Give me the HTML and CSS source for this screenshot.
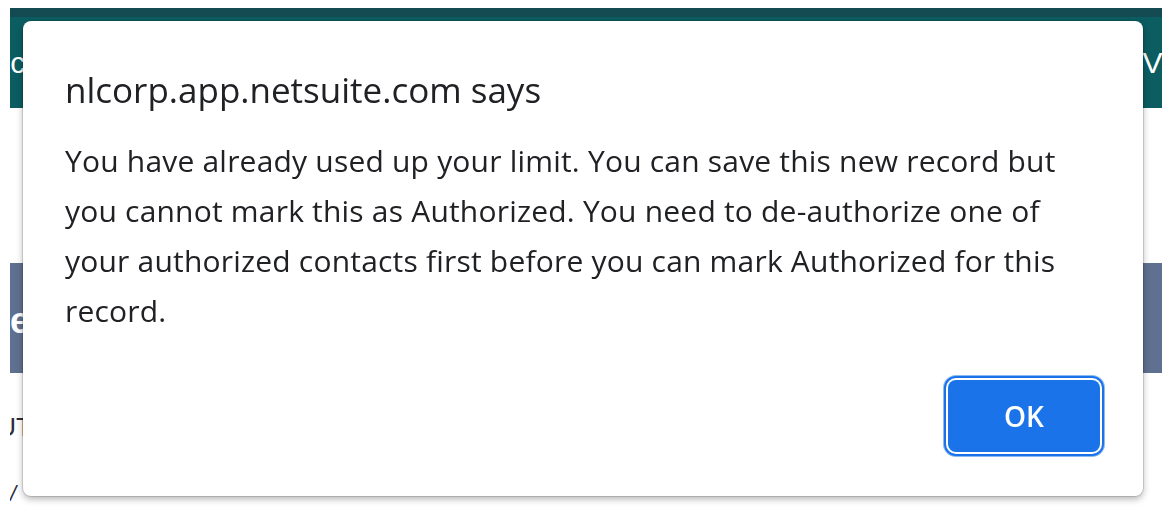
FILE: index.html
```html
<!DOCTYPE html>
<html lang="en">
<head>
    <meta charset="UTF-8" />
    <meta name="viewport" content="width=device-width, initial-scale=1.0"/>
    <title>Contact</title>
    <link rel="stylesheet" href="styles.css">
</head>
<body>

<div class="page">
    <!-- top navigation, mostly hidden under the alert -->
    <div class="topbar">
        <span class="nav-item nav-first">Rec</span>
        <span class="nav-item">Contacts</span>
        <span class="nav-spacer"></span>
        <span class="nav-item">Contacts</span>
        <span class="nav-item nav-last">Views</span>
    </div>

    <div class="record-head">
        <span class="record-title">Case</span>
    </div>

    <div class="field-row field-first">
        <span class="field-label">AUTHORIZED</span>
    </div>
    <div class="field-row">
        <span class="field-value">/</span>
    </div>
</div>

<!-- browser alert -->
<div class="alert" role="alertdialog">
    <div class="alert-title">nlcorp.app.netsuite.com says</div>
    <div class="alert-message">You have already used up your limit. You can save this new record but you cannot mark this as Authorized. You need to de-authorize one of your authorized contacts first before you can mark Authorized for this record.</div>
    <div class="alert-buttons">
        <button class="ok-btn">OK</button>
    </div>
</div>

</body>
</html>
```

FILE: styles.css
```css
body {
    margin: 0;
    font-family: "Liberation Sans", Arial, sans-serif;
    background: #fff;
}
.page {
    padding: 8px 10px 0;
    height: 520px;
    box-sizing: border-box;
    overflow: hidden;
}
.topbar {
    display: flex;
    align-items: center;
    gap: 4px;
    height: 100px;
    box-sizing: border-box;
    border-top: 9px solid #144a52;
    background: #0b5d61;
    color: #fff;
    font-size: 30px;
    white-space: nowrap;
    overflow: hidden;
}
.nav-first {
    margin-left: -38px;
}
.nav-spacer {
    flex: 1;
}
.nav-last {
    margin-right: -60px;
}
.record-head {
    margin-top: 155px;
    height: 110px;
    background: #5f7090;
    display: flex;
    align-items: center;
    overflow: hidden;
}
.record-title {
    color: #fff;
    font-size: 36px;
    font-weight: bold;
    margin-left: -66px;
    padding-top: 6px;
}
.field-row {
    height: 64px;
    display: flex;
    align-items: flex-end;
    overflow: hidden;
    color: #2b2b3a;
}
.field-first {
    height: 70px;
}
.field-label {
    font-size: 26px;
    margin-left: -30px;
}
.field-value {
    font-size: 22px;
    font-style: italic;
}

/* alert dialog */
.alert {
    position: fixed;
    left: 23px;
    top: 21px;
    width: 1120px;
    box-sizing: border-box;
    padding: 49px 43px 44px 42px;
    background: #fff;
    border-radius: 8px;
    box-shadow: 0 0 0 1px rgba(0, 0, 0, 0.12), 0 3px 7px rgba(0, 0, 0, 0.3);
    color: #202124;
    font-family: "Open Sans", "Noto Sans", sans-serif;
}
.alert-title {
    font-size: 35px;
    line-height: 40px;
}
.alert-message {
    max-width: 1010px;
    margin-top: 26px;
    font-size: 30px;
    line-height: 50px;
    letter-spacing: 0.2px;
}
.alert-buttons {
    display: flex;
    justify-content: flex-end;
    margin-top: 44px;
}
.ok-btn {
    width: 152px;
    height: 72px;
    border: none;
    border-radius: 8px;
    background: #1a73e8;
    color: #fff;
    font-family: "Open Sans", "Noto Sans", sans-serif;
    font-size: 28px;
    font-weight: 600;
    box-shadow: 0 0 0 2px #fff, 0 0 0 4px #1a73e8, 0 0 0 5px rgba(26, 115, 232, 0.5);
    cursor: pointer;
}
```
